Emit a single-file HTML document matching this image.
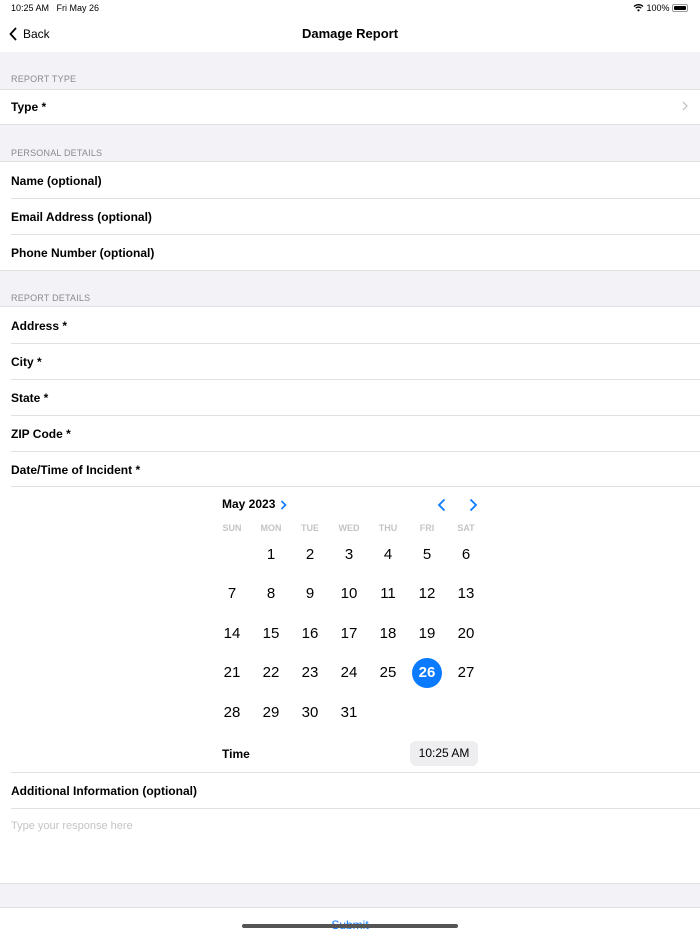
<!DOCTYPE html>
<html><head><meta charset="utf-8"><style>
*{margin:0;padding:0;box-sizing:border-box}
body{width:700px;height:934px;position:relative;background:#fff;font-family:"Liberation Sans",sans-serif;color:#000;overflow:hidden}
.a{position:absolute}
.g{position:absolute;left:0;width:700px;background:#f2f2f7}
.h{position:absolute;left:11px;font-size:9px;color:#8a8a8e;letter-spacing:.2px}
.r{position:absolute;left:11px;font-size:12px;font-weight:bold}
.sep{position:absolute;height:1px;background:#e0e0e3}
.d{position:absolute;width:30px;text-align:center;font-size:15px}
.w{position:absolute;width:30px;text-align:center;font-size:9px;color:#c4c4c7;font-weight:bold}
</style></head><body>
<div class="a" style="left:11px;top:3px;font-size:9px">10:25 AM&nbsp;&nbsp; Fri May 26</div>
<div class="a" style="left:633px;top:3px;font-size:9px">
<svg width="11" height="9" viewBox="0 0 11 9" style="vertical-align:-1px"><path d="M1 3.5a6.5 6.5 0 0 1 9 0M2.7 5.2a4 4 0 0 1 5.6 0" stroke="#000" stroke-width="1.3" fill="none"/><circle cx="5.5" cy="7.3" r="1.1"/></svg> 100%</div>
<div class="a" style="left:672px;top:4px;width:16px;height:8px;border:1px solid #999;border-radius:2px;padding:1px"><div style="width:100%;height:100%;background:#000;border-radius:1px"></div></div>
<svg class="a" style="left:9px;top:27px" width="9" height="14"><path d="M7 1L1.5 7L7 13" stroke="#000" stroke-width="1.8" fill="none"/></svg>
<div class="a" style="left:23px;top:27px;font-size:12px">Back</div>
<div class="a" style="left:0;width:700px;top:26px;text-align:center;font-size:13px;font-weight:bold">Damage Report</div>

<div class="g" style="top:52px;height:37px"></div>
<div class="h" style="top:74px">REPORT TYPE</div>
<div class="sep" style="left:0;width:700px;top:89px"></div>
<div class="r" style="top:100px">Type *</div>
<svg class="a" style="left:682px;top:101px" width="6" height="10"><path d="M1 1l4 4-4 4" stroke="#bbb" stroke-width="1.2" fill="none"/></svg>
<div class="g" style="top:124px;height:38px;border-top:1px solid #e0e0e3;border-bottom:1px solid #e0e0e3"></div>
<div class="h" style="top:148px">PERSONAL DETAILS</div>
<div class="r" style="top:174px">Name (optional)</div>
<div class="sep" style="left:11px;width:689px;top:198px"></div>
<div class="r" style="top:210px">Email Address (optional)</div>
<div class="sep" style="left:11px;width:689px;top:234px"></div>
<div class="r" style="top:246px">Phone Number (optional)</div>
<div class="g" style="top:270px;height:37px;border-top:1px solid #e0e0e3;border-bottom:1px solid #e0e0e3"></div>
<div class="h" style="top:293px">REPORT DETAILS</div>
<div class="r" style="top:319px">Address *</div>
<div class="sep" style="left:11px;width:689px;top:343px"></div>
<div class="r" style="top:355px">City *</div>
<div class="sep" style="left:11px;width:689px;top:379px"></div>
<div class="r" style="top:391px">State *</div>
<div class="sep" style="left:11px;width:689px;top:415px"></div>
<div class="r" style="top:427px">ZIP Code *</div>
<div class="sep" style="left:11px;width:689px;top:451px"></div>
<div class="r" style="top:463px">Date/Time of Incident *</div>
<div class="sep" style="left:11px;width:689px;top:486px"></div>

<div class="a" style="left:222px;top:497px;font-size:12px;font-weight:bold">May 2023</div>
<svg class="a" style="left:280px;top:500px" width="7" height="10"><path d="M1.5 1l4 4-4 4" stroke="#0a7aff" stroke-width="1.6" fill="none"/></svg>
<svg class="a" style="left:437px;top:498px" width="9" height="14"><path d="M7.5 1.5L2 7l5.5 5.5" stroke="#0a7aff" stroke-width="1.8" fill="none"/></svg>
<svg class="a" style="left:469px;top:498px" width="9" height="14"><path d="M1.5 1.5L7 7l-5.5 5.5" stroke="#0a7aff" stroke-width="1.8" fill="none"/></svg>
<div class="w" style="left:217px;top:523px">SUN</div><div class="w" style="left:256px;top:523px">MON</div><div class="w" style="left:295px;top:523px">TUE</div><div class="w" style="left:334px;top:523px">WED</div><div class="w" style="left:373px;top:523px">THU</div><div class="w" style="left:412px;top:523px">FRI</div><div class="w" style="left:451px;top:523px">SAT</div>
<div class="a" style="left:412px;top:658px;width:30px;height:30px;border-radius:50%;background:#0a7aff"></div>
<div id="cal"></div>
<script>
var xs=[217,256,295,334,373,412,451],ys=[546,585,625,664,704],h='';
for(var d=1;d<=31;d++){var i=d;var c=i%7,r=Math.floor(i/7);
h+='<div class="d" style="left:'+xs[c]+'px;top:'+ys[r]+'px;'+(d==26?'color:#fff;font-weight:bold;font-size:15px':'')+'">'+d+'</div>';}
document.getElementById('cal').innerHTML=h;
</script>
<div class="a" style="left:222px;top:747px;font-size:12px;font-weight:bold">Time</div>
<div class="a" style="left:410px;top:741px;width:68px;height:25px;border-radius:6px;background:#eeeef0;font-size:12px;text-align:center;line-height:25px">10:25 AM</div>
<div class="sep" style="left:11px;width:689px;top:772px"></div>
<div class="r" style="top:784px">Additional Information (optional)</div>
<div class="sep" style="left:11px;width:689px;top:808px"></div>
<div class="a" style="left:11px;top:820px;font-size:11px;color:#c4c4c7">Type your response here</div>
<div class="g" style="top:883px;height:25px;border-top:1px solid #e0e0e3;border-bottom:1px solid #e0e0e3"></div>
<div class="a" style="left:0;width:700px;top:918px;text-align:center;font-size:12px;color:#0a7aff">Submit</div>
<div class="a" style="left:242px;top:924px;width:216px;height:4px;border-radius:2px;background:#555"></div>
</body></html>
